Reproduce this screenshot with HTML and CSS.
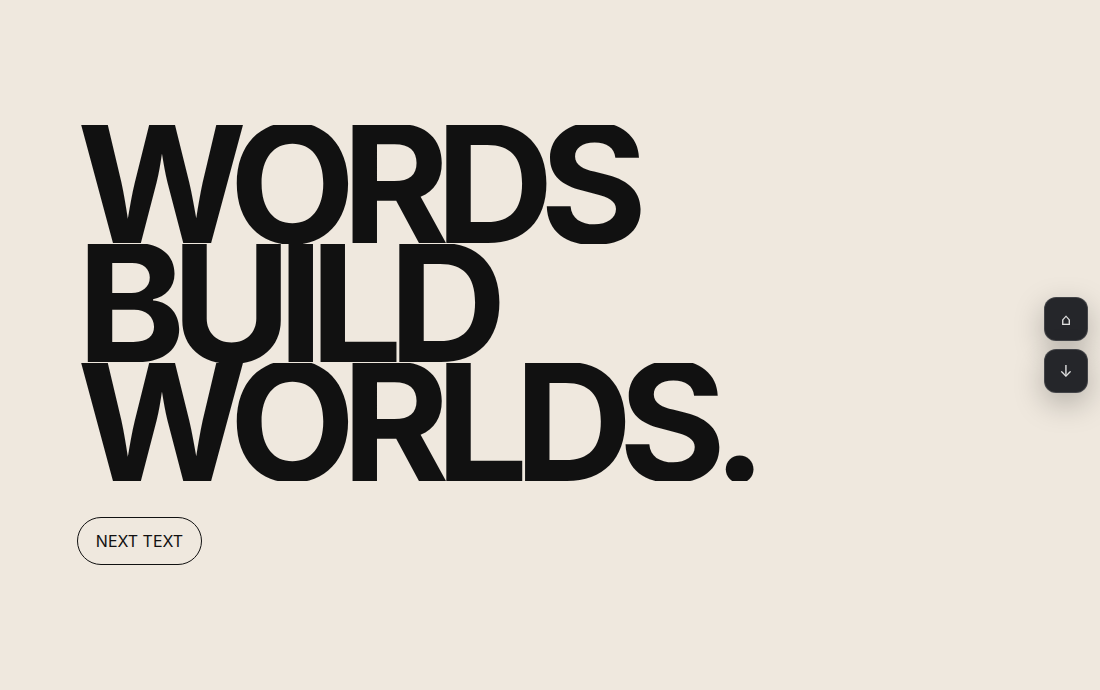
FILE: index.html
```html
<!DOCTYPE html>
<html lang="en">
<head>
<meta charset="utf-8">
<title>Words build worlds</title>
<link rel="stylesheet" href="styles.css">
</head>
<body>
<main class="hero">
  <h1 class="headline">
    <span class="line">WORDS</span>
    <span class="line">BUILD</span>
    <span class="line">WORLDS.</span>
  </h1>
  <button class="next" type="button">NEXT TEXT</button>
</main>
<nav class="rail">
  <button class="rail-btn" type="button">⌂</button>
  <button class="rail-btn" type="button">↓</button>
</nav>
</body>
</html>
```
FILE: styles.css
```css
* { box-sizing: border-box; }
html, body { height: 100%; }
body {
  margin: 0;
  background: #efe8de;
  color: #111;
  font-family: Inter, "Liberation Sans", sans-serif;
  overflow: hidden;
}
.hero {
  height: 690px;
  padding: 125px 0 0 77px;
  display: flex;
  flex-direction: column;
  align-items: flex-start;
}
.headline {
  margin: 0;
  font-size: 164px;
  font-weight: 750;
  line-height: 118.8px;
  letter-spacing: -0.085em;
}
.line {
  display: block;
  overflow: hidden;
  height: 118.8px;
  padding-right: 24px;
}
.next {
  margin-top: 36px;
  height: 48px;
  width: 125px;
  border: 1px solid #111;
  border-radius: 24px;
  background: transparent;
  color: #111;
  font: 400 16px/1 Inter, sans-serif;
  padding: 0;
}
.rail {
  position: fixed;
  right: 12px;
  top: 297px;
  display: flex;
  flex-direction: column;
  gap: 8px;
}
.rail-btn {
  width: 44px;
  height: 44px;
  border: 1px solid rgba(255,255,255,0.14);
  border-radius: 12px;
  background: #25262a;
  color: #e0e0e0;
  font: 400 16px Inter, "DejaVu Sans", sans-serif;
  padding: 0;
  box-shadow: 0 10px 30px rgba(0,0,0,0.25);
}
```
